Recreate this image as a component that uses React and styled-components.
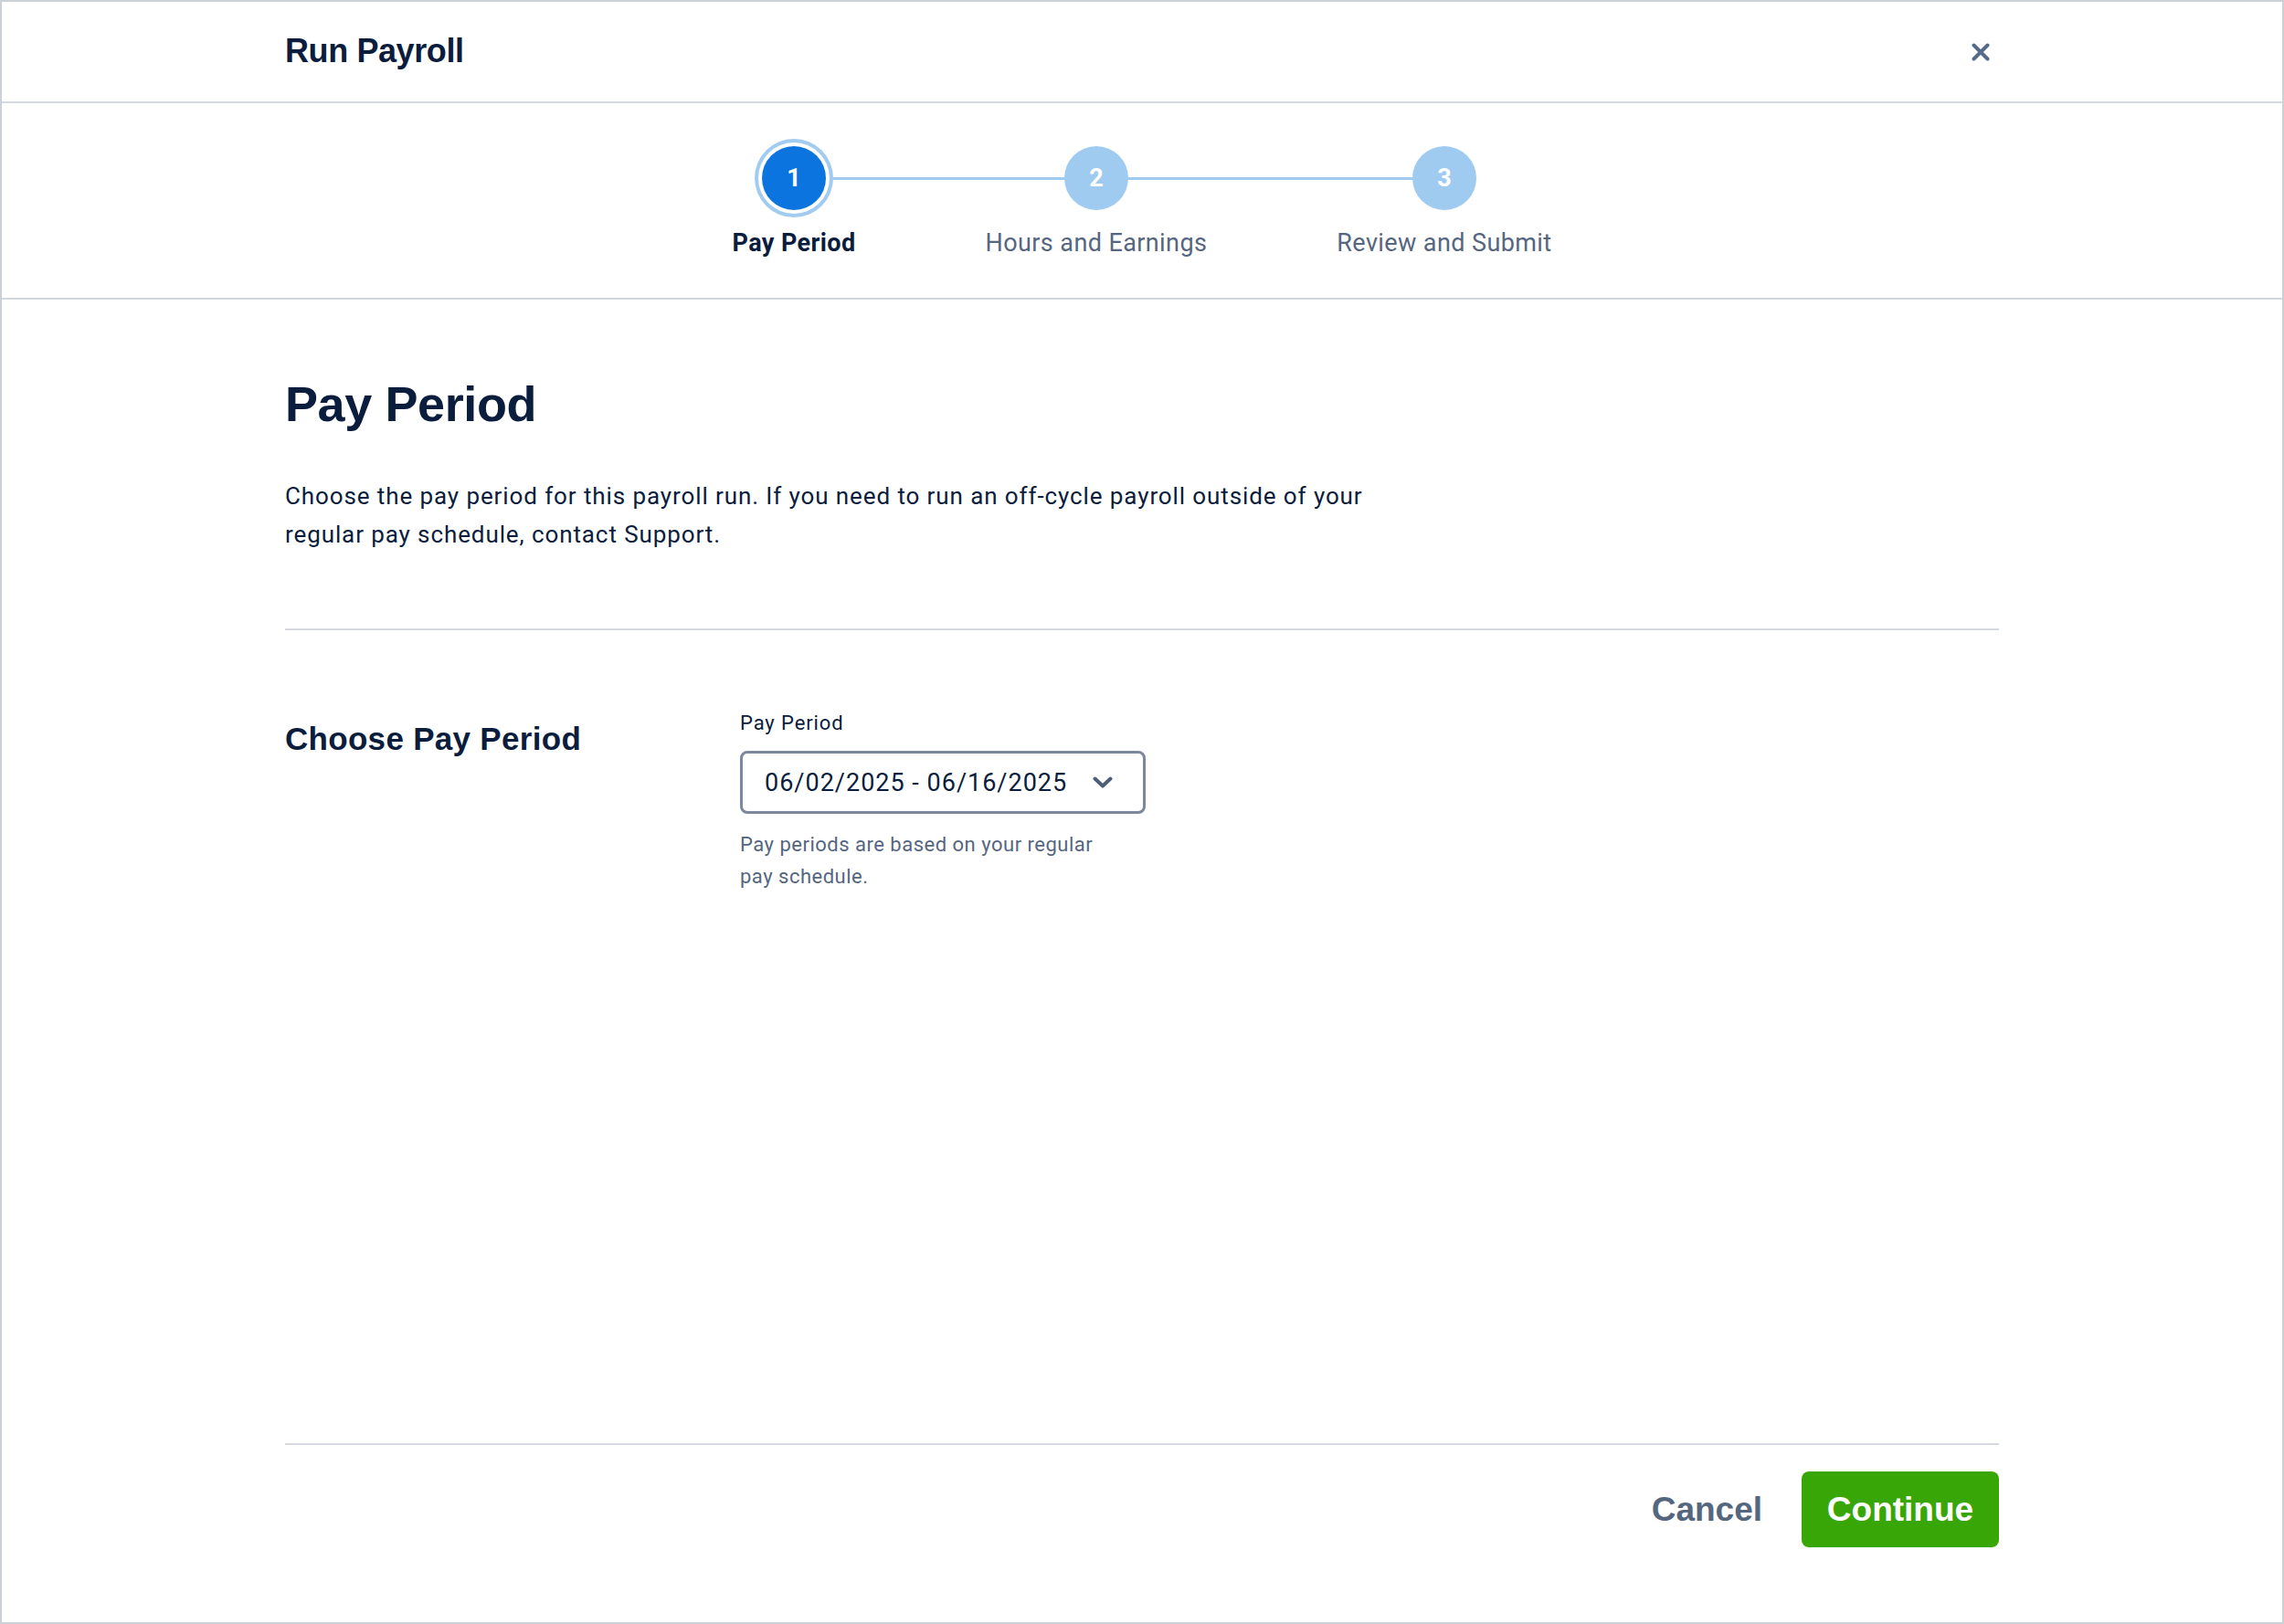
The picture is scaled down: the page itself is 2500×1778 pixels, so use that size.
import React from "react";
import styled, { createGlobalStyle } from "styled-components";

const GlobalStyle = createGlobalStyle`
  html, body {
    margin: 0;
    padding: 0;
    background: #ffffff;
  }
  * {
    box-sizing: border-box;
  }
`;

const navy = "#0b1d3c";
const slate = "#55667f";
const lightBlue = "#a2cbf0";

const Frame = styled.div`
  width: 2500px;
  height: 1778px;
  border: 2px solid #ccd0d7;
  display: flex;
  flex-direction: column;
  font-family: Roboto, "Liberation Sans", sans-serif;
  color: ${navy};
`;

const Inner = styled.div`
  width: 1876px;
  margin: 0 auto;
`;

const Header = styled.header`
  height: 111px;
  border-bottom: 2px solid #d3d7de;
  display: flex;
  align-items: center;
`;

const HeaderInner = styled(Inner)`
  display: flex;
  align-items: center;
  justify-content: space-between;
`;

const Title = styled.h1`
  margin: 0 0 2px;
  font-family: "Liberation Sans", Arial, sans-serif;
  font-size: 36px;
  font-weight: 700;
  letter-spacing: -0.4px;
  color: ${navy};
`;

const CloseButton = styled.button`
  width: 40px;
  height: 40px;
  border: 0;
  padding: 0;
  background: transparent;
  display: flex;
  align-items: center;
  justify-content: center;
  cursor: pointer;
`;

const StepperBar = styled.div`
  border-bottom: 2px solid #d3d7de;
  padding: 39px 0 42px;
  display: flex;
  justify-content: center;
  gap: 142px;
`;

const Step = styled.div`
  display: flex;
  flex-direction: column;
  align-items: center;
`;

const CircleWrap = styled.div`
  position: relative;
  width: 100%;
  height: 86px;
  display: flex;
  align-items: center;
  justify-content: center;

  &::before,
  &::after {
    content: "";
    position: absolute;
    top: 50%;
    height: 3px;
    margin-top: -1px;
    background: ${lightBlue};
  }
  &::before {
    left: -71px;
    right: 50%;
    display: ${(p) => (p.$first ? "none" : "block")};
  }
  &::after {
    left: 50%;
    right: -71px;
    display: ${(p) => (p.$last ? "none" : "block")};
  }
`;

const Circle = styled.div`
  position: relative;
  z-index: 1;
  width: 70px;
  height: 70px;
  border-radius: 50%;
  background: ${(p) => (p.$active ? "#0b74de" : "#9fcbf1")};
  box-shadow: ${(p) =>
    p.$active ? `0 0 0 4px #ffffff, 0 0 0 8px ${lightBlue}` : "none"};
  color: #ffffff;
  font-size: 27px;
  font-weight: 700;
  display: flex;
  align-items: center;
  justify-content: center;
`;

const StepLabel = styled.div`
  margin-top: 10px;
  font-size: 27px;
  line-height: 36px;
  letter-spacing: 0.4px;
  white-space: nowrap;
  font-weight: ${(p) => (p.$active ? 700 : 400)};
  color: ${(p) => (p.$active ? navy : slate)};
`;

const Main = styled.main`
  flex: 1;
  padding-top: 82px;
`;

const PageHeading = styled.h2`
  margin: 0;
  font-family: "Liberation Sans", Arial, sans-serif;
  font-size: 54px;
  line-height: 65px;
  font-weight: 700;
  letter-spacing: -0.4px;
  color: ${navy};
`;

const Intro = styled.p`
  margin: 47px 0 0;
  max-width: 1220px;
  font-size: 26px;
  line-height: 42px;
  letter-spacing: 0.9px;
  color: ${navy};
`;

const Divider = styled.hr`
  margin: ${(p) => p.$top || 0}px 0 0;
  border: 0;
  height: 2px;
  background: #d6dae0;
`;

const FieldRow = styled.section`
  display: grid;
  grid-template-columns: 498px 1fr;
  padding-top: 87px;
`;

const SectionTitle = styled.h3`
  margin: 11px 0 0;
  font-family: "Liberation Sans", Arial, sans-serif;
  font-size: 35px;
  line-height: 41px;
  font-weight: 700;
  letter-spacing: 0.3px;
  color: ${navy};
`;

const Field = styled.div`
  display: flex;
  flex-direction: column;
  width: 444px;
`;

const FieldLabel = styled.label`
  font-size: 22px;
  line-height: 30px;
  letter-spacing: 0.9px;
  color: ${navy};
`;

const SelectBox = styled.button`
  margin-top: 15px;
  height: 69px;
  width: 444px;
  padding: 0 33px 0 24px;
  border: 3px solid #7b879a;
  border-radius: 8px;
  background: #ffffff;
  display: flex;
  align-items: center;
  justify-content: space-between;
  font-family: Roboto, "Liberation Sans", sans-serif;
  font-size: 27px;
  letter-spacing: 1px;
  color: ${navy};
  cursor: pointer;
`;

const Helper = styled.p`
  margin: 16px 0 0;
  max-width: 420px;
  font-size: 22px;
  line-height: 35px;
  letter-spacing: 0.5px;
  color: ${slate};
`;

const Footer = styled.footer`
  padding-bottom: 82px;
`;

const Actions = styled.div`
  display: flex;
  justify-content: flex-end;
  align-items: center;
  gap: 43px;
  padding-top: 29px;
`;

const TextButton = styled.button`
  border: 0;
  padding: 0;
  background: transparent;
  font-family: "Liberation Sans", Arial, sans-serif;
  font-size: 37px;
  font-weight: 700;
  color: #55667f;
  cursor: pointer;
`;

const PrimaryButton = styled.button`
  width: 216px;
  height: 83px;
  border: 0;
  border-radius: 8px;
  background: #38a606;
  font-family: "Liberation Sans", Arial, sans-serif;
  font-size: 37px;
  font-weight: 700;
  color: #ffffff;
  cursor: pointer;
`;

const steps = ["Pay Period", "Hours and Earnings", "Review and Submit"];

const CloseIcon = () => (
  <svg width="20" height="20" viewBox="0 0 20 20" fill="none">
    <path
      d="M2.5 2.5 L17.5 17.5 M17.5 2.5 L2.5 17.5"
      stroke="#566a89"
      strokeWidth="4"
      strokeLinecap="round"
    />
  </svg>
);

const Chevron = () => (
  <svg width="22" height="13" viewBox="0 0 22 13" fill="none">
    <path
      d="M2.5 2.5 L11 10.5 L19.5 2.5"
      stroke="#4f5e77"
      strokeWidth="4"
      strokeLinecap="round"
      strokeLinejoin="round"
    />
  </svg>
);

export default function App() {
  const current = 0;
  return (
    <>
      <GlobalStyle />
      <Frame>
        <Header>
          <HeaderInner>
            <Title>Run Payroll</Title>
            <CloseButton aria-label="Close">
              <CloseIcon />
            </CloseButton>
          </HeaderInner>
        </Header>

        <StepperBar>
          {steps.map((label, i) => (
            <Step key={label}>
              <CircleWrap $first={i === 0} $last={i === steps.length - 1}>
                <Circle $active={i === current}>{i + 1}</Circle>
              </CircleWrap>
              <StepLabel $active={i === current}>{label}</StepLabel>
            </Step>
          ))}
        </StepperBar>

        <Main>
          <Inner>
            <PageHeading>Pay Period</PageHeading>
            <Intro>
              Choose the pay period for this payroll run. If you need to run an
              off-cycle payroll outside of your regular pay schedule, contact
              Support.
            </Intro>
            <Divider $top={82} />
            <FieldRow>
              <SectionTitle>Choose Pay Period</SectionTitle>
              <Field>
                <FieldLabel>Pay Period</FieldLabel>
                <SelectBox>
                  <span>06/02/2025 - 06/16/2025</span>
                  <Chevron />
                </SelectBox>
                <Helper>
                  Pay periods are based on your regular pay schedule.
                </Helper>
              </Field>
            </FieldRow>
          </Inner>
        </Main>

        <Footer>
          <Inner>
            <Divider />
            <Actions>
              <TextButton>Cancel</TextButton>
              <PrimaryButton>Continue</PrimaryButton>
            </Actions>
          </Inner>
        </Footer>
      </Frame>
    </>
  );
}
